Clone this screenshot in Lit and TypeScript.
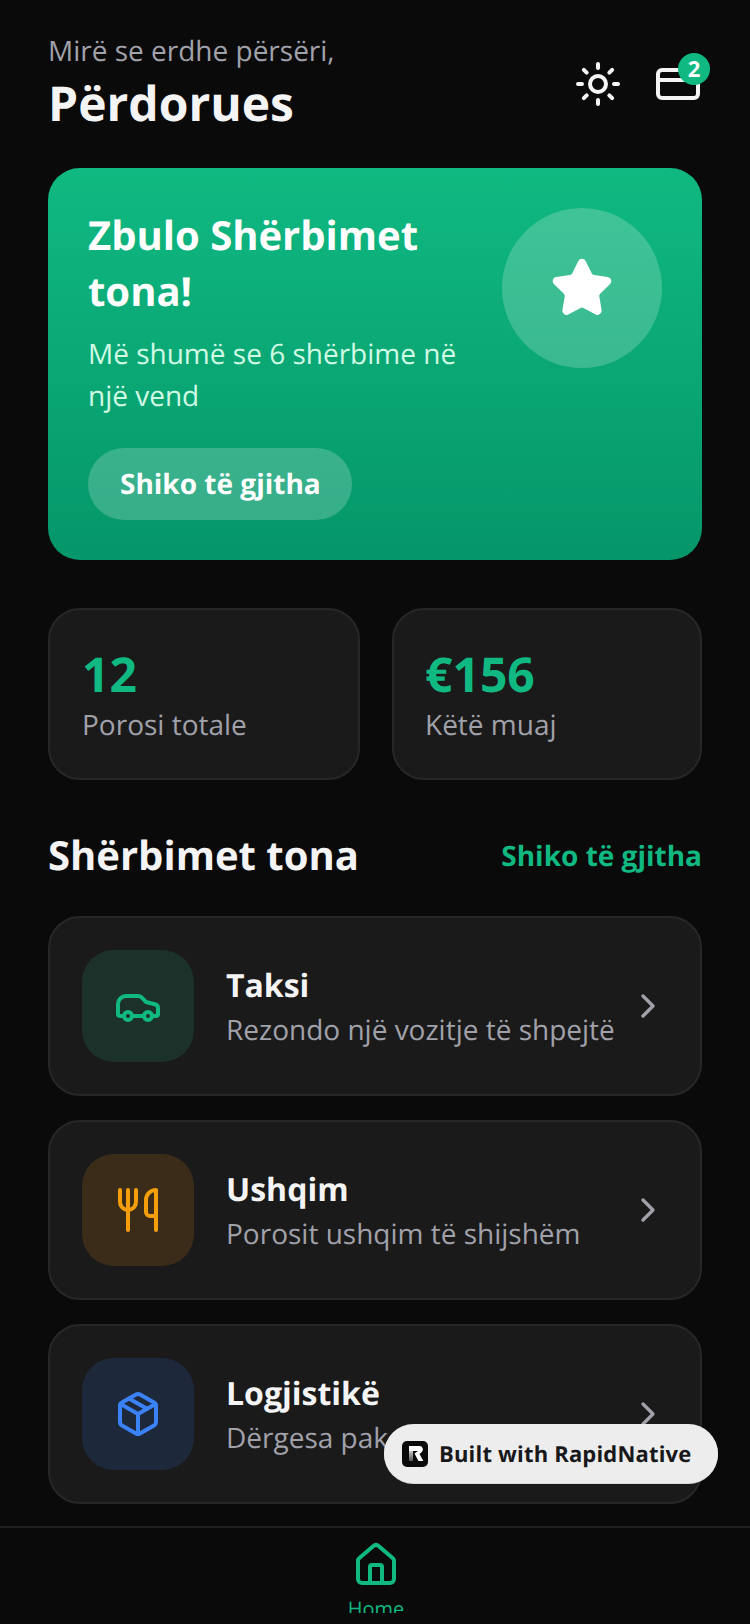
import { LitElement, css, html, svg } from 'lit';
import { customElement } from 'lit/decorators.js';

const services = [
    {
        title: 'Taksi',
        text: 'Rezondo një vozitje të shpejtë',
        tone: 'green',
        icon: svg`<path d="M19 17h2c.6 0 1-.4 1-1v-3c0-.9-.7-1.700-1.500-1.900C18.700 10.600 16 10 16 10s-1.300-1.400-2.200-2.300c-.5-.4-1.100-.7-1.800-.7H6a4 4 0 0 0-4 4v5c0 .6.4 1 1 1h2"/><circle cx="7" cy="17" r="2"/><path d="M9 17h6"/><circle cx="17" cy="17" r="2"/>`,
    },
    {
        title: 'Ushqim',
        text: 'Porosit ushqim të shijshëm',
        tone: 'amber',
        icon: svg`<path d="M3 2v6a4 4 0 0 0 4 4 4 4 0 0 0 4-4V2"/><path d="M7 2v20"/><path d="M21 15V2a5 5 0 0 0-5 5v6c0 1.100.9 2 2 2h3Zm0 0v7"/>`,
    },
    {
        title: 'Logjistikë',
        text: 'Dërgesa pako të shpejta',
        tone: 'blue',
        icon: svg`<path d="M11 21.730a2 2 0 0 0 2 0l7-4A2 2 0 0 0 21 16V8a2 2 0 0 0-1-1.730l-7-4a2 2 0 0 0-2 0l-7 4A2 2 0 0 0 3 8v8a2 2 0 0 0 1 1.730z"/><path d="M12 22V12"/><path d="M3.290 7 12 12l8.710-5"/><path d="m7.500 4.270 9 5.150"/>`,
    },
];

@customElement('app-root')
export class AppRoot extends LitElement {
    static styles = css`
        :host {
            display: flex;
            flex-direction: column;
            width: 750px;
            height: 1624px;
            overflow: hidden;
            position: relative;
            background: #0a0a0a;
            font-family: "Open Sans", sans-serif;
            color: #f4f4f5;
            text-rendering: geometricPrecision;
        }

        svg {
            display: block;
            fill: none;
            stroke: currentColor;
            stroke-width: 2;
            stroke-linecap: round;
            stroke-linejoin: round;
        }

        .main {
            flex: 1;
            min-height: 0;
            overflow: hidden;
            padding: 32px 48px 0;
        }

        .top {
            display: flex;
            justify-content: space-between;
            align-items: center;
            height: 104px;
            margin-bottom: 32px;
        }
        .greet {
            font-size: 28px;
            line-height: 40px;
            color: #a1a1aa;
        }
        .name {
            font-size: 48px;
            line-height: 66px;
            font-weight: 700;
        }
        .actions {
            display: flex;
            align-items: center;
            gap: 32px;
        }
        .wallet {
            position: relative;
        }
        .badge {
            position: absolute;
            top: -7px;
            right: -8px;
            width: 32px;
            height: 32px;
            border-radius: 50%;
            background: #10b981;
            color: #fff;
            font-size: 22px;
            font-weight: 700;
            line-height: 32px;
            text-align: center;
        }

        .hero {
            height: 392px;
            box-sizing: border-box;
            border-radius: 32px;
            padding: 39px 40px 40px;
            background: linear-gradient(180deg, #10b981, #059669);
            display: flex;
            justify-content: space-between;
            align-items: flex-start;
            margin-bottom: 48px;
        }
        .hero h1 {
            margin: 0;
            font-size: 40px;
            line-height: 56px;
            font-weight: 700;
            color: #fff;
        }
        .hero p {
            margin: 14px 0 31px;
            font-size: 28px;
            line-height: 42px;
            color: #d1fae5;
        }
        .hero-copy {
            width: 380px;
        }
        .pill {
            display: inline-block;
            padding: 0 31px 0 32px;
            height: 72px;
            line-height: 72px;
            border-radius: 36px;
            background: rgba(255, 255, 255, .2);
            color: #fff;
            font-size: 28px;
            font-weight: 700;
        }
        .orb {
            width: 160px;
            height: 160px;
            margin-top: 1px;
            border-radius: 50%;
            background: rgba(255, 255, 255, .2);
            display: flex;
            align-items: center;
            justify-content: center;
            color: #fff;
        }
        .orb svg {
            fill: #fff;
        }

        .stats {
            display: grid;
            grid-template-columns: 312px 310px;
            gap: 32px;
            margin-bottom: 48px;
        }
        .stat {
            height: 172px;
            box-sizing: border-box;
            border: 2px solid #27272a;
            border-radius: 32px;
            background: #1a1a1a;
            padding: 35px 32px;
        }
        .stat + .stat {
            padding-left: 31px;
        }
        .stat b {
            display: block;
            font-size: 48px;
            line-height: 60px;
            font-weight: 700;
            color: #10b981;
        }
        .stat span {
            display: block;
            font-size: 28px;
            line-height: 40px;
            color: #a1a1aa;
        }

        .head {
            display: flex;
            justify-content: space-between;
            align-items: center;
            height: 56px;
            margin-bottom: 32px;
        }
        .head h2 {
            margin: -2px 0 0;
            font-size: 40px;
            line-height: 56px;
            font-weight: 700;
        }
        .head a {
            font-size: 28px;
            font-weight: 700;
            color: #10b981;
        }

        .rows {
            display: flex;
            flex-direction: column;
            gap: 24px;
        }
        .row {
            height: 180px;
            box-sizing: border-box;
            border: 2px solid #27272a;
            border-radius: 32px;
            background: #1a1a1a;
            padding: 0 32px;
            display: flex;
            align-items: center;
        }
        .tile {
            width: 112px;
            height: 112px;
            border-radius: 32px;
            flex: none;
            display: flex;
            align-items: center;
            justify-content: center;
            margin-right: 32px;
        }
        .tile.green { background: #1c3129; color: #10b981; }
        .tile.amber { background: #3a2c19; color: #f59e0b; }
        .tile.blue { background: #1d293b; color: #3b82f6; }
        .copy {
            flex: 1;
            min-width: 0;
            padding-top: 2px;
        }
        .copy b {
            display: block;
            font-size: 32px;
            line-height: 44px;
            font-weight: 700;
        }
        .copy span {
            display: block;
            margin-top: 2px;
            font-size: 28px;
            line-height: 40px;
            color: #a1a1aa;
        }
        .chev {
            color: #a1a1aa;
        }

        .tabs {
            flex: none;
            height: 72px;
            border-top: 2px solid #1f1f1f;
            margin-bottom: 11px;
            overflow: hidden;
            display: flex;
            flex-direction: column;
            align-items: center;
            padding: 13px 0 0 2px;
            color: #10b981;
        }
        .tabs svg {
            flex: none;
        }
        .tabs span {
            font-size: 20px;
            line-height: 28px;
            margin-top: 6px;
        }

        .built {
            position: absolute;
            left: 384px;
            top: 1424px;
            width: 334px;
            height: 59px;
            box-sizing: border-box;
            border-radius: 30px;
            background: #ededed;
            box-shadow: 0 1px 0 #d9d9d9;
            display: flex;
            align-items: center;
            padding-left: 18px;
            gap: 11px;
            color: #18181b;
            font-size: 22px;
            font-weight: 700;
            letter-spacing: .18px;
            white-space: nowrap;
        }
        .logo {
            width: 26px;
            height: 26px;
            border-radius: 5px;
            background: #0a0a0a;
            flex: none;
        }
    `;

    private _row(item: (typeof services)[number]) {
        return html`
            <div class="row">
                <div class="tile ${item.tone}">
                    <svg width="48" height="48" viewBox="0 0 24 24">${item.icon}</svg>
                </div>
                <div class="copy">
                    <b>${item.title}</b>
                    <span>${item.text}</span>
                </div>
                <svg class="chev" width="40" height="40" viewBox="0 0 24 24"><path d="m9 18 6-6-6-6"/></svg>
            </div>
        `;
    }

    render() {
        return html`
            <div class="main">
                <div class="top">
                    <div>
                        <div class="greet">Mirë se erdhe përsëri,</div>
                        <div class="name">Përdorues</div>
                    </div>
                    <div class="actions">
                        <svg width="48" height="48" viewBox="0 0 24 24">
                            <circle cx="12" cy="12" r="4"/>
                            <path d="M12 2v2M12 20v2M4.930 4.930l1.410 1.410M17.660 17.660l1.410 1.410M2 12h2M20 12h2M6.340 17.660l-1.410 1.410M19.070 4.930l-1.410 1.410"/>
                        </svg>
                        <div class="wallet">
                            <svg width="48" height="48" viewBox="0 0 24 24">
                                <rect x="2" y="5" width="20" height="14" rx="2"/>
                                <path d="M2 10h20"/>
                            </svg>
                            <div class="badge">2</div>
                        </div>
                    </div>
                </div>

                <div class="hero">
                    <div class="hero-copy">
                        <h1>Zbulo Shërbimet tona!</h1>
                        <p>Më shumë se 6 shërbime në një vend</p>
                        <span class="pill">Shiko të gjitha</span>
                    </div>
                    <div class="orb">
                        <svg width="64" height="64" viewBox="0 0 24 24">
                            <path d="M11.525 2.295a.53.53 0 0 1 .95 0l2.31 4.679a2.123 2.123 0 0 0 1.595 1.160l5.166.756a.53.53 0 0 1 .294.904l-3.736 3.638a2.123 2.123 0 0 0-.611 1.878l.882 5.140a.53.53 0 0 1-.771.560l-4.618-2.428a2.122 2.122 0 0 0-1.973 0L6.396 21.010a.53.53 0 0 1-.77-.560l.881-5.139a2.122 2.122 0 0 0-.611-1.879L2.160 9.795a.53.53 0 0 1 .294-.906l5.165-.755a2.122 2.122 0 0 0 1.597-1.160z"/>
                        </svg>
                    </div>
                </div>

                <div class="stats">
                    <div class="stat"><b>12</b><span>Porosi totale</span></div>
                    <div class="stat"><b>€156</b><span>Këtë muaj</span></div>
                </div>

                <div class="head">
                    <h2>Shërbimet tona</h2>
                    <a>Shiko të gjitha</a>
                </div>

                <div class="rows">
                    ${services.map((s) => this._row(s))}
                </div>
            </div>

            <div class="tabs">
                <svg width="48" height="48" viewBox="0 0 24 24">
                    <path d="M15 21v-8a1 1 0 0 0-1-1h-4a1 1 0 0 0-1 1v8"/>
                    <path d="M3 10a2 2 0 0 1 .709-1.528l7-5.999a2 2 0 0 1 2.582 0l7 5.999A2 2 0 0 1 21 10v9a2 2 0 0 1-2 2H5a2 2 0 0 1-2-2z"/>
                </svg>
                <span>Home</span>
            </div>

            <div class="built">
                <svg class="logo" viewBox="0 0 26 26" style="stroke:none">
                    <defs>
                        <linearGradient id="stem" x1="0" y1="0" x2="0" y2="1">
                            <stop offset="0" stop-color="#fff"/>
                            <stop offset="1" stop-color="#555"/>
                        </linearGradient>
                    </defs>
                    <path d="M7 5h4v15H7Z" fill="url(#stem)"/>
                    <path d="M7 5h10.500a3.500 3.500 0 0 1 2.300 6.100L17.500 13l3.800 7h-4.800l-4-7.500 3.500-2.500H7Z" fill="#fff"/>
                </svg>
                Built with RapidNative
            </div>
        `;
    }
}
